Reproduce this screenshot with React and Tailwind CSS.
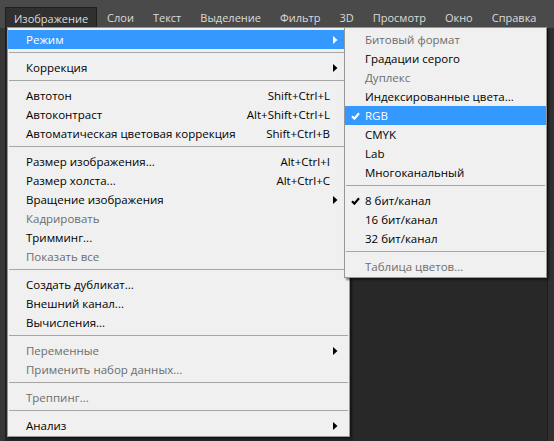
import React from "react";

const Arrow = ({ white }) => (
  <svg width="5" height="8" viewBox="0 0 5 8" className="absolute right-[11px] top-[6px]">
    <path d="M0 0 L4.5 4 L0 8 Z" fill={white ? "#ffffff" : "#000000"} />
  </svg>
);

const Check = ({ white }) => (
  <svg width="9" height="8" viewBox="0 0 9 8" className="absolute left-[6px] top-[6px]">
    <path d="M1 4.2 L3.4 6.6 L8 1.2" stroke={white ? "#ffffff" : "#000000"} strokeWidth="2.2" fill="none" />
  </svg>
);

const mainItems = [
  { t: "Режим", arrow: true, active: true },
  { sep: true },
  { t: "Коррекция", arrow: true },
  { sep: true },
  { t: "Автотон", k: "Shift+Ctrl+L" },
  { t: "Автоконтраст", k: "Alt+Shift+Ctrl+L" },
  { t: "Автоматическая цветовая коррекция", k: "Shift+Ctrl+B" },
  { sep: true },
  { t: "Размер изображения...", k: "Alt+Ctrl+I" },
  { t: "Размер холста...", k: "Alt+Ctrl+C" },
  { t: "Вращение изображения", arrow: true },
  { t: "Кадрировать", dis: true },
  { t: "Тримминг..." },
  { t: "Показать все", dis: true },
  { sep: true },
  { t: "Создать дубликат..." },
  { t: "Внешний канал..." },
  { t: "Вычисления..." },
  { sep: true },
  { t: "Переменные", dis: true, arrow: true },
  { t: "Применить набор данных...", dis: true },
  { sep: true },
  { t: "Треппинг...", dis: true },
  { sep: true },
  { t: "Анализ", arrow: true },
];

const subItems = [
  { t: "Битовый формат", dis: true },
  { t: "Градации серого" },
  { t: "Дуплекс", dis: true },
  { t: "Индексированные цвета..." },
  { t: "RGB", active: true, check: true },
  { t: "CMYK" },
  { t: "Lab" },
  { t: "Многоканальный" },
  { sep: true },
  { t: "8 бит/канал", check: true },
  { t: "16 бит/канал" },
  { t: "32 бит/канал" },
  { sep: true },
  { t: "Таблица цветов...", dis: true },
];

const Sep = () => (
  <div className="h-[9px] pt-[3px] px-[1px]">
    <div className="h-px bg-[#a6a6a6]" />
  </div>
);

const Row = ({ it, pl }) => {
  const color = it.active ? "text-white" : it.dis ? "text-[#6d6d6d]" : "text-black";
  return (
    <div
      className={`relative h-[19px] flex items-center justify-between ${pl} pr-[19px] ${color} ${
        it.active ? "bg-[#3399ff]" : ""
      }`}
    >
      {it.check && <Check white={it.active} />}
      <span className="whitespace-nowrap">{it.t}</span>
      {it.k && <span className="whitespace-nowrap">{it.k}</span>}
      {it.arrow && <Arrow white={it.active} />}
    </div>
  );
};

const barItems = ["Изображение", "Слои", "Текст", "Выделение", "Фильтр", "3D", "Просмотр", "Окно", "Справка"];

export default function App() {
  return (
    <div className="w-[554px] h-[441px] overflow-hidden bg-[#282828] flex flex-col font-['Open_Sans',sans-serif] text-[11.5px] leading-none">
      <div className="h-[28px] shrink-0 bg-[#4a4a4a] flex items-start pl-[5px] pt-[7px] text-[11px] text-[#dcdcdc]">
        {barItems.map((b, i) => (
          <div
            key={b}
            className={`px-[8px] h-[21px] flex items-center mr-px ${
              i === 0 ? "bg-[#303030] border border-b-0 border-[#1e1e1e]" : "border border-transparent"
            }`}
          >
            {b}
          </div>
        ))}
      </div>
      <div className="relative flex-1 flex">
        <div className="w-[6px] h-full bg-[#363636] border-r border-[#1e1e1e]" />
        <div className="flex-1" />
        <div className="w-[7px] h-full bg-[#303030] border-l border-[#1e1e1e]" />

        <div className="absolute left-[7px] top-[-1px] w-[343px] bg-[#f0f0f0] border border-[#979797] pt-[2px] pb-[1px] shadow-[2px_2px_2px_rgba(0,0,0,0.5)]">
          {mainItems.map((it, i) => (it.sep ? <Sep key={i} /> : <Row key={i} it={it} pl="pl-[18px]" />))}
        </div>

        <div className="absolute left-[344px] top-[-1px] w-[203px] bg-[#f0f0f0] border border-[#979797] pt-[2px] pb-[1px] shadow-[2px_2px_2px_rgba(0,0,0,0.5)]">
          {subItems.map((it, i) => (it.sep ? <Sep key={i} /> : <Row key={i} it={it} pl="pl-[20px]" />))}
        </div>
      </div>
    </div>
  );
}
